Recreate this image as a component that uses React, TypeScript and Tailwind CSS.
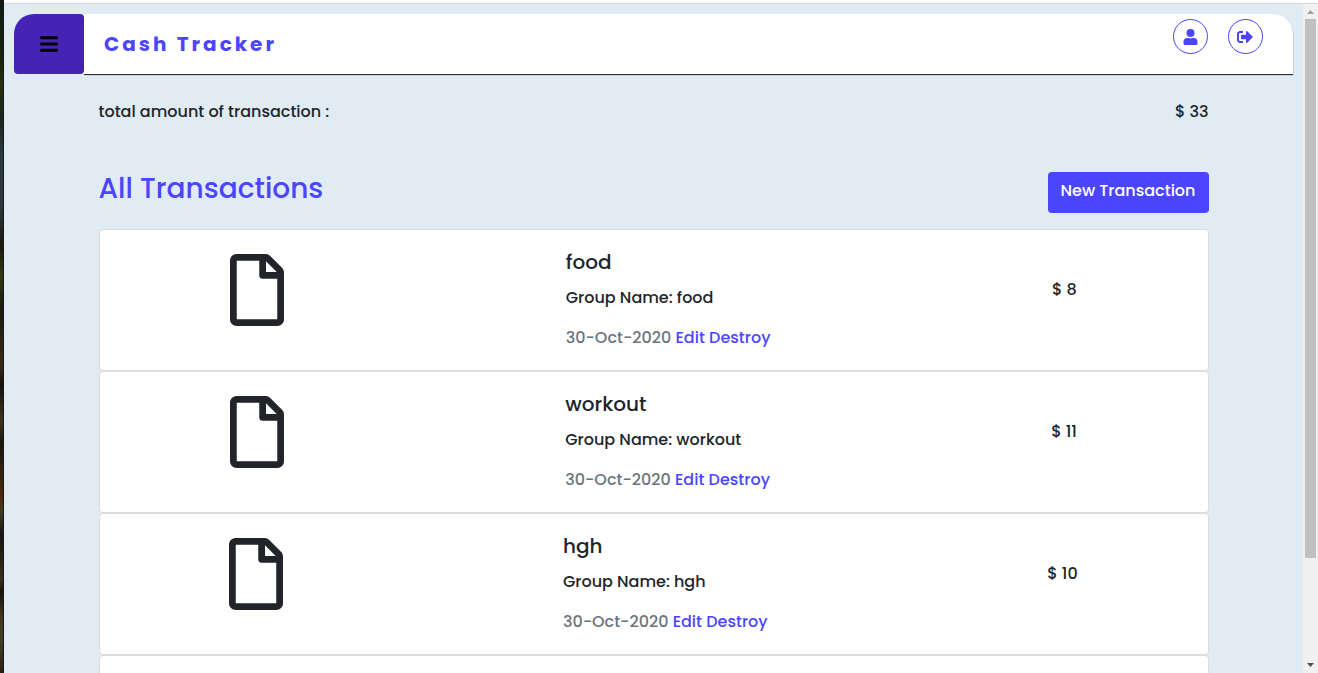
import { FaBars, FaRegFile, FaSignOutAlt } from "react-icons/fa";

type Transaction = {
  name: string;
  group: string;
  date: string;
  amount: string;
};

const transactions: Transaction[] = [
  { name: "food", group: "food", date: "30-Oct-2020", amount: "$ 8" },
  { name: "workout", group: "workout", date: "30-Oct-2020", amount: "$ 11" },
  { name: "hgh", group: "hgh", date: "30-Oct-2020", amount: "$ 10" },
];

function UserIcon() {
  return (
    <svg className="h-4 w-[15px]" viewBox="0 0 15 16" fill="currentColor">
      <circle cx="7.5" cy="4" r="4" />
      <path d="M4.5 9h.7c1.5.65 3.1.65 4.6 0h.7a4 4 0 0 1 4 4v1.5a1.5 1.5 0 0 1-1.5 1.5H2A1.5 1.5 0 0 1 .5 14.5V13a4 4 0 0 1 4-4z" />
    </svg>
  );
}

function TransactionCard({ item }: { item: Transaction }) {
  return (
    <article className="h-[142px] shrink-0 rounded-[4px] border border-[#dddddf] bg-white">
      <div className="-mx-[10px] flex justify-around">
        <FaRegFile className="mt-6 h-[72px] w-[54px] text-[#212529]" />
        <div className="pt-5">
          <h2 className="text-[20px] leading-6">{item.name}</h2>
          <p className="mt-3 leading-6">Group Name: {item.group}</p>
          <p className="mt-4 leading-6 text-[#6c757d]">
            {item.date} <a className="text-[#4c45ff]">Edit</a> <a className="text-[#4c45ff]">Destroy</a>
          </p>
        </div>
        <div className="pt-12 leading-6">{item.amount}</div>
      </div>
    </article>
  );
}

export default function App() {
  return (
    <div className="flex h-[673px] w-[1318px] overflow-hidden bg-[#e0ebf3] font-['Poppins','Inter',sans-serif] text-base font-medium text-[#212529]">
      <div className="w-1 shrink-0 border-r border-[#15171a] bg-[linear-gradient(to_bottom,#101c14_0px,#18230f_60px,#24300f_85px,#19251a_115px,#2b3b43_160px,#2a363b_210px,#1c1810_245px,#2d3a10_275px,#1b1a11_310px,#382816_365px,#15120f_385px,#3f331e_420px,#191611_445px,#4a2b10_498px,#403c25_512px,#17140f_535px,#3a2f1b_580px,#15130f_592px,#43351f_615px,#40402a_640px,#2b1e12_673px)]" />
      <div className="flex min-w-0 flex-1 flex-col">
        <div className="h-1 shrink-0 border-b border-[#d5d9df] bg-white" />
        <div className="flex min-h-0 flex-1">
          <main className="flex flex-1 flex-col overflow-hidden px-[10px] pt-[10px]">
            <header className="flex h-[61px] w-[1279px] shrink-0">
              <button className="flex h-[60px] w-[70px] items-center justify-center rounded-[4px] rounded-tl-[20px] bg-[#4723b5]">
                <FaBars className="size-5 text-black" />
              </button>
              <div className="flex flex-1 justify-between rounded-tr-[20px] border-b border-[#2b2f36] bg-white pl-5 pr-[30px] shadow-[0.5px_0.5px_0_rgba(80,90,100,0.35)]">
                <h1 className="text-[20px] font-bold leading-[60px] tracking-[3px] text-[#4c45ff]">Cash Tracker</h1>
                <div className="flex gap-5 pt-[5px]">
                  <a className="flex size-[35px] items-center justify-center rounded-full border border-[#4c45ff] text-[#4c45ff]">
                    <UserIcon />
                  </a>
                  <a className="flex size-[35px] items-center justify-center rounded-full border border-[#4c45ff] pr-px text-[#4c45ff]">
                    <FaSignOutAlt className="size-4" />
                  </a>
                </div>
              </div>
            </header>
            <div className="ml-[84.5px] flex w-[1110px] shrink-0 flex-col">
              <div className="flex justify-between pt-[25px] leading-6">
                <span>total amount of transaction :</span>
                <span>$ 33</span>
              </div>
              <div className="mt-12 flex h-[57px] justify-between">
                <h2 className="text-[28px] leading-[34px] text-[#4c45ff]">All Transactions</h2>
                <button className="h-[41px] w-[161px] rounded-[4px] bg-[#4c45ff] pb-1 text-white">New Transaction</button>
              </div>
              {transactions.map((item) => (
                <TransactionCard key={item.name} item={item} />
              ))}
              <article className="h-[142px] rounded-[4px] border border-[#dddddf] bg-white" />
            </div>
          </main>
          <div className="flex w-[15px] shrink-0 flex-col items-center bg-[#f0f0f0]">
            <svg className="h-[15px] w-[15px]" viewBox="0 0 15 15"><path d="M4 10h7L7.5 6z" fill="#a0a0a0" /></svg>
            <div className="h-[539px] w-[11px] bg-[#c0c0c0]" />
            <svg className="mt-auto h-[15px] w-[15px]" viewBox="0 0 15 15"><path d="M4 5h7L7.5 9z" fill="#505050" /></svg>
          </div>
        </div>
      </div>
    </div>
  );
}
